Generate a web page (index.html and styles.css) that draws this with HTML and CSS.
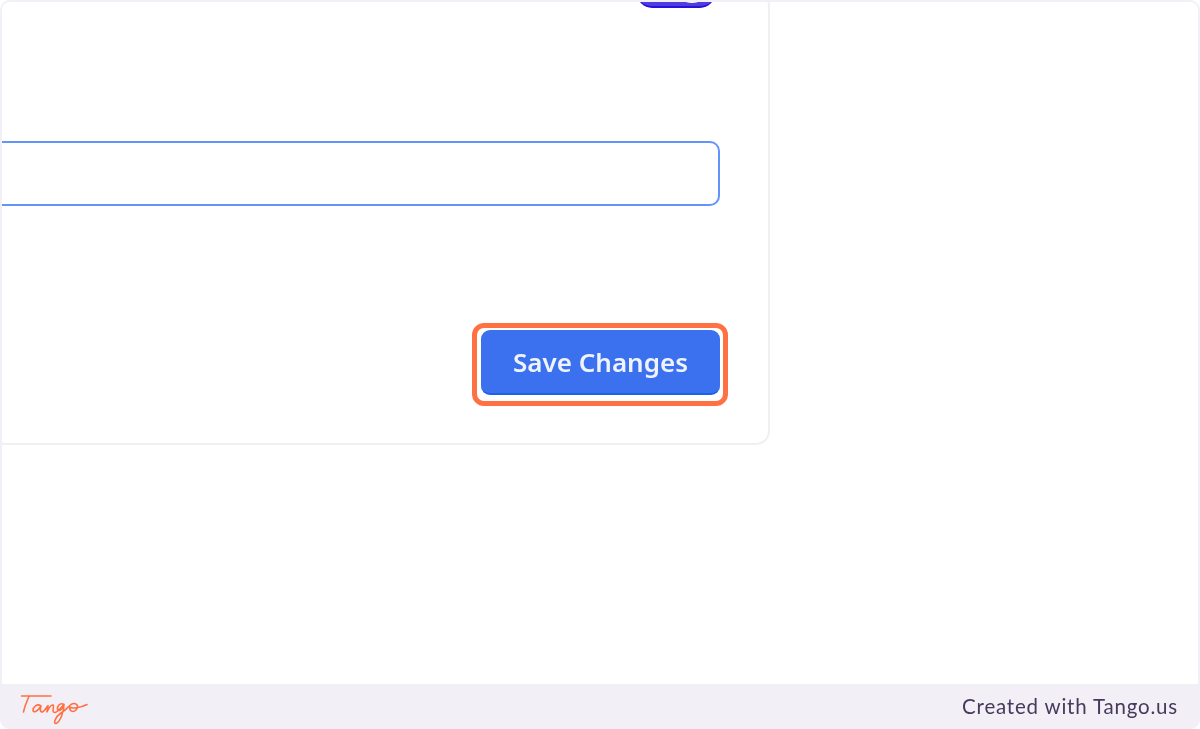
FILE: index.html
```html
<!DOCTYPE html>
<html lang="en">
<head>
<meta charset="utf-8">
<title>Save Changes</title>
<link rel="stylesheet" href="styles.css">
</head>
<body>
<div class="frame">
  <main class="shot">
    <section class="card">
      <div class="toggle-row"><span class="toggle"><span class="knob"></span></span></div>
      <div class="field"></div>
      <div class="actions">
        <div class="highlight"><button class="save" type="button"><span class="save-label">Save Changes</span></button></div>
      </div>
    </section>
  </main>
  <footer class="bar">
    <svg class="logo" width="70" height="34" viewBox="0 0 70 34" fill="none" stroke="#ff7043" stroke-width="1.600" stroke-linecap="round" stroke-linejoin="round" role="img" aria-label="Tango logo">
      <path d="M1.500 4 H31"/>
      <path d="M9 4.500 C6.500 10 4.500 15 3.500 20"/>
      <path d="M21 14 C17 11 13 15 13 18.500 C13.500 21.500 18 19 21 14 C20 17 20 20.500 22.500 20 C25 19 26.500 15 28 13.500 C28 16 27 18.500 27 20 C29 15.500 31 12.500 33 13 C35 14 31 20 34.500 20.500 C38 20.500 41 15 44 12.500 C40 10 36 15 38 18 C40 19.500 43 16 44 12.500 C44 20 40 30 36 31.500 C33 32 35 25 41 21 C46 18 48 15 51 12.500 C55 10 60 13 56 18 C53 21 49 19 50 15 C52 17 60 16 67 12.500"/>
    </svg>
    <span class="credit">Created with Tango.us</span>
  </footer>
</div>
</body>
</html>
```
FILE: styles.css
```css
* { box-sizing: border-box; }
html, body { margin: 0; padding: 0; background: #fff; }
.frame {
  width: 1200px;
  height: 729px;
  display: flex;
  flex-direction: column;
  overflow: hidden;
  background: #f2f0f6;
  border-radius: 10px;
}
.shot {
  flex: 1;
  min-height: 0;
  overflow: hidden;
  margin: 2px 2px 0;
  background: #fff;
  border-radius: 8px 8px 0 0;
}
.card {
  width: 778px;
  height: 453px;
  margin: -10px 0 0 -10px;
  border: 2px solid #f0f0f2;
  border-radius: 14px;
  background: #fff;
  padding: 0 48px 0 0;
  display: flex;
  flex-direction: column;
  align-items: flex-end;
}
.toggle-row { height: 15px; display: flex; justify-content: flex-end; width: 100%; padding-right: 5px; }
.toggle {
  width: 78px;
  height: 30px;
  margin-top: -16px;
  border-radius: 16px;
  background: #4f3de0;
  border-bottom: 2px solid #2a10dc;
  filter: blur(.6px);
  display: flex;
  justify-content: flex-end;
  align-items: flex-end;
  padding: 0 8px 3px 0;
}
.knob { width: 30px; height: 24px; border-radius: 50%; background: #fff; }
.field {
  width: 100%;
  height: 65px;
  margin-top: 132px;
  border: 2px solid #6294fb;
  border-left: 0;
  border-radius: 0 10px 10px 0;
  background: #fff;
  filter: blur(.4px);
}
.actions { margin-top: 117px; margin-right: -8px; }
.highlight {
  width: 256px;
  height: 83px;
  border: 5px solid #ff7043;
  border-radius: 12px;
  background: #fff;
  padding: 2px 3px 6px 4px;
}
.save {
  display: block;
  width: 100%;
  height: 100%;
  margin: 0;
  border: 0;
  border-bottom: 2px solid #1a62ea;
  border-radius: 9px;
  background: #3b71ee;
  color: #eef3ff;
  font: 600 26px/1 "Noto Sans", "Open Sans", sans-serif;
  padding: 0;
}
.save-label { display: inline-block; filter: blur(.5px); }
.bar {
  height: 45px;
  flex: none;
  display: flex;
  align-items: center;
  justify-content: space-between;
  padding: 0 22px 0 20px;
  background: #f2f0f6;
}
.logo { display: block; margin-top: 5px; }
.credit {
  font: 400 20.500px/1 Lato, "Noto Sans", sans-serif;
  letter-spacing: .8px;
  color: #46395c;
  filter: blur(.3px);
}
```
